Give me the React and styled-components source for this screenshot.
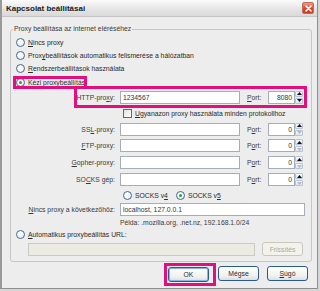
import React from 'react'
import styled, {createGlobalStyle} from 'styled-components'

const GlobalStyle = createGlobalStyle`
  html, body {
    margin: 0;
    padding: 0;
    background: #d6d6d6;
  }
  body {
    font-family: "Liberation Sans", Arial, sans-serif;
    font-size: 6.8px;
    color: #2a2a2a;
  }
`;

const PINK = '#e30f7c';

const Window = styled.div`
  width: 318px;
  height: 289px;
  box-sizing: border-box;
  border: 1px solid #8e8e8e;
  border-left: 2px solid #9a9a9a;
  border-top: none;
  background: #ededed;
  display: flex;
  flex-direction: column;
`;

const TitleBar = styled.div`
  height: 17px;
  flex: none;
  display: flex;
  align-items: center;
  justify-content: space-between;
  padding: 0 3px 0 4px;
  background: linear-gradient(#fbfbfb, #e4e4e4 60%, #d9d9d9);
  border-bottom: 1px solid #c4c4c4;
  box-sizing: border-box;
`;

const Title = styled.span`
  font-weight: bold;
  font-size: 8px;
  color: #1b1b1b;
`;

const CloseButton = styled.div`
  width: 12px;
  height: 12px;
  border-radius: 2px;
  border: 1px solid #b9705f;
  box-sizing: border-box;
  background: linear-gradient(#f39a82, #d9492b 55%, #c83a1f);
  display: flex;
  align-items: center;
  justify-content: center;
`;

const Body = styled.div`
  flex: 1;
  display: flex;
  flex-direction: column;
  padding: 0 5px 0 8px;
`;

const GroupBox = styled.div`
  margin-top: 12px;
  border: 1px solid #c6c6c6;
  border-radius: 3px;
  padding-bottom: 4px;
`;

const Legend = styled.div`
  height: 10px;
  line-height: 10px;
  margin: -6px 0 2px 2px;
  padding: 0 1px;
  width: fit-content;
  background: #ededed;
  color: #3a3a3a;
`;

const RadioRow = styled.div`
  height: ${p => p.$h}px;
  display: flex;
  align-items: center;
  padding-left: ${p => p.$indent}px;
`;

const RadioDot = styled.span`
  width: 9px;
  height: 9px;
  flex: none;
  box-sizing: border-box;
  border-radius: 50%;
  border: 1px solid #3f6a94;
  background: radial-gradient(circle at 35% 35%, #ffffff, #e6e9ee);
  display: flex;
  align-items: center;
  justify-content: center;
  &::after {
    content: '';
    width: 3px;
    height: 3px;
    border-radius: 50%;
    background: ${p => (p.$checked ? '#2fa12f' : 'transparent')};
  }
`;

const OptionText = styled.span`
  margin-left: 3px;
  white-space: nowrap;
  color: ${p => (p.$disabled ? '#a9a79c' : '#2a2a2a')};
`;

const Marked = styled.span`
  display: inline-flex;
  align-items: center;
  height: 7px;
  width: 68px;
  outline: 3px solid ${PINK};
`;

const CheckBox = styled.span`
  width: 9px;
  height: 9px;
  flex: none;
  box-sizing: border-box;
  border: 1px solid #4a6f95;
  background: linear-gradient(135deg, #e2e2dc, #ffffff);
`;

const ProxyRow = styled.div`
  height: ${p => p.$h}px;
  margin-left: 66px;
  width: ${p => p.$w || 227}px;
  display: flex;
  align-items: center;
  outline: ${p => (p.$marked ? `3px solid ${PINK}` : 'none')};
`;

const FieldLabel = styled.span`
  width: 39px;
  padding-right: 1px;
  box-sizing: border-box;
  flex: none;
  display: flex;
  justify-content: flex-end;
  white-space: nowrap;
  color: #3a3a3a;
`;

const TextInput = styled.div`
  width: ${p => p.$w}px;
  margin-left: ${p => p.$ml || 0}px;
  height: ${p => p.$hh || 13}px;
  flex: none;
  box-sizing: border-box;
  border: 1px solid ${p => (p.$disabled ? '#cbcac0' : '#a4adb8')};
  background: ${p => (p.$disabled ? '#ebebe3' : '#ffffff')};
  display: flex;
  align-items: center;
  justify-content: ${p => (p.$right ? 'flex-end' : 'flex-start')};
  padding: 0 2px;
  white-space: nowrap;
  overflow: hidden;
  color: #333;
`;

const PortLabel = styled.span`
  width: 28px;
  padding-left: 7px;
  box-sizing: border-box;
  flex: none;
  color: #3a3a3a;
`;

const Spinner = styled.div`
  width: 8px;
  height: 13px;
  flex: none;
  display: flex;
  flex-direction: column;
  gap: 1px;
`;

const SpinHalf = styled.div`
  flex: 1;
  box-sizing: border-box;
  border: 1px solid #b8c3d3;
  border-radius: 1px;
  background: linear-gradient(#f7f9fc, #dfe5ee);
  display: flex;
  align-items: center;
  justify-content: center;
`;

const Note = styled.div`
  height: 12px;
  display: flex;
  align-items: center;
  padding-left: 109px;
  color: #3a3a3a;
  white-space: nowrap;
`;

const UrlRow = styled.div`
  height: 16px;
  display: flex;
  align-items: center;
  padding-left: 17px;
  gap: 7px;
`;

const Button = styled.div`
  width: 41px;
  height: ${p => p.$h || 15}px;
  flex: none;
  box-sizing: border-box;
  border-radius: 3px;
  border: 1px solid ${p => (p.$disabled ? '#c9c8bd' : '#2d5a8c')};
  background: ${p => (p.$disabled ? '#f3f3ee' : 'linear-gradient(#ffffff, #f0f0ec 70%, #d9dde6)')};
  box-shadow: ${p => (p.$focus ? 'inset 0 0 0 1px #8fb3e6' : 'none')};
  display: flex;
  align-items: center;
  justify-content: center;
  color: ${p => (p.$disabled ? '#aaa89c' : '#2a2a2a')};
`;

const ButtonBar = styled.div`
  flex: 1;
  display: flex;
  align-items: flex-start;
  justify-content: flex-end;
  padding: 4px 4px 0 0;
`;

const Focused = styled.div`
  padding: 1px 4px 1px 1px;
  margin-right: 5px;
  outline: 3px solid ${PINK};
`;

const Gap = styled.div`
  width: ${p => p.$w}px;
  flex: none;
`;

const Arrow = ({down, dim}) => (
  <svg width="5" height="3" viewBox="0 0 5 3">
    <path d={down ? 'M0 0 H5 L2.5 3 Z' : 'M0 3 H5 L2.5 0 Z'} fill={dim ? '#b4b9c2' : '#111'}/>
  </svg>
);

const Port = ({value, dimDown}) => (
  <>
    <TextInput $w={27} $right>{value}</TextInput>
    <Spinner>
      <SpinHalf><Arrow/></SpinHalf>
      <SpinHalf><Arrow down dim={dimDown}/></SpinHalf>
    </Spinner>
  </>
);

const Radio = ({checked, children, disabled}) => (
  <>
    <RadioDot $checked={checked}/>
    <OptionText $disabled={disabled}>{children}</OptionText>
  </>
);

const proxies = [
  {label: <>SS<u>L</u>-proxy:</>, h: 16},
  {label: <><u>F</u>TP-proxy:</>, h: 17},
  {label: <><u>G</u>opher-proxy:</>, h: 17},
  {label: <>SO<u>C</u>KS gép:</>, h: 17},
];

export default function App() {
  return (
    <>
      <GlobalStyle/>
      <Window>
        <TitleBar>
          <Title>Kapcsolat beállításai</Title>
          <CloseButton>
            <svg width="7" height="7" viewBox="0 0 7 7">
              <path d="M1 1 L6 6 M6 1 L1 6" stroke="#fff" strokeWidth="1.6" strokeLinecap="round"/>
            </svg>
          </CloseButton>
        </TitleBar>

        <Body>
          <GroupBox>
            <Legend>Proxy beállítása az internet eléréséhez</Legend>

            <RadioRow $h={13} $indent={5}>
              <Radio><u>N</u>incs proxy</Radio>
            </RadioRow>
            <RadioRow $h={13} $indent={5}>
              <Radio>Prox<u>y</u>beállítások automatikus felismerése a hálózatban</Radio>
            </RadioRow>
            <RadioRow $h={13} $indent={5}>
              <Radio><u>R</u>endszerbeállítások használata</Radio>
            </RadioRow>
            <RadioRow $h={14} $indent={5}>
              <Marked>
                <Radio checked><u>K</u>ézi proxybeállítás:</Radio>
              </Marked>
            </RadioRow>

            <ProxyRow $h={16} $marked>
              <FieldLabel>HTTP-pro<u>x</u>y:</FieldLabel>
              <TextInput $w={120} $ml={4}>1234567</TextInput>
              <PortLabel><u>P</u>ort:</PortLabel>
              <Port value="8080"/>
            </ProxyRow>

            <RadioRow $h={16} $indent={112}>
              <CheckBox/>
              <OptionText><u>U</u>gyanazon proxy használata minden protokollhoz</OptionText>
            </RadioRow>

            {proxies.map((p, i) => (
              <ProxyRow key={i} $h={p.h}>
                <FieldLabel>{p.label}</FieldLabel>
                <TextInput $w={120} $ml={4}/>
                <PortLabel>P<u>o</u>rt:</PortLabel>
                <Port value="0" dimDown/>
              </ProxyRow>
            ))}

            <RadioRow $h={15} $indent={112}>
              <Radio>SOCKS v<u>4</u></Radio>
              <Gap $w={8}/>
              <Radio checked>SOCKS v<u>5</u></Radio>
            </RadioRow>

            <ProxyRow $h={13} $w={228}>
              <FieldLabel><u>N</u>incs proxy a következőhöz:</FieldLabel>
              <TextInput $w={185} $ml={4}>localhost, 127.0.0.1</TextInput>
            </ProxyRow>

            <Note>Példa: .mozilla.org, .net.nz, 192.168.1.0/24</Note>

            <RadioRow $h={13} $indent={5}>
              <Radio><u>A</u>utomatikus proxybeállítás URL:</Radio>
            </RadioRow>

            <UrlRow>
              <TextInput $w={227} $disabled/>
              <Button $disabled $h={14}>Frissítés</Button>
            </UrlRow>
          </GroupBox>

          <ButtonBar>
            <Focused>
              <Button $focus>OK</Button>
            </Focused>
            <Button>Mégse</Button>
            <Gap $w={8}/>
            <Button><u>S</u>úgó</Button>
          </ButtonBar>
        </Body>
      </Window>
    </>
  );
}
